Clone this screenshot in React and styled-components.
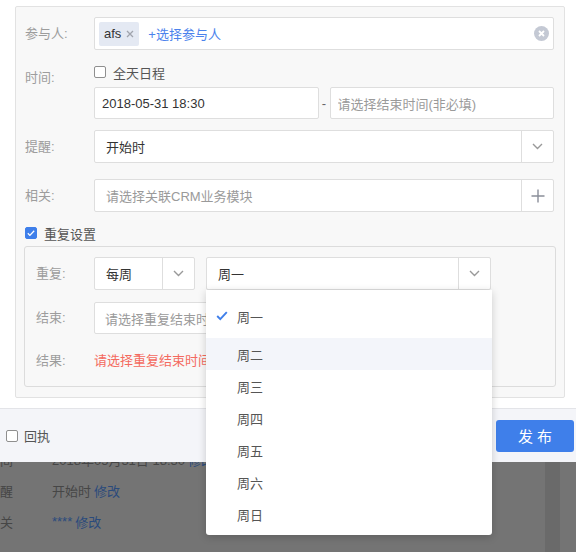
import styled, { createGlobalStyle } from "styled-components";

const GlobalStyle = createGlobalStyle`
  html, body {
    margin: 0;
    padding: 0;
  }
  body {
    background: #fff;
    font-family: "Liberation Sans", "Noto Sans CJK SC", sans-serif;
    font-size: 13px;
    color: #333;
  }
  * {
    box-sizing: border-box;
  }
`;

const weekDays = ["周一", "周二", "周三", "周四", "周五", "周六", "周日"];

function Chevron() {
  return (
    <svg width="11" height="7" viewBox="0 0 11 7">
      <path d="M1 1l4.5 4.5L10 1" fill="none" stroke="#999" strokeWidth="1.4" />
    </svg>
  );
}

function Plus() {
  return (
    <svg width="14" height="14" viewBox="0 0 14 14">
      <path d="M7 0.5v13M0.5 7h13" fill="none" stroke="#8a8e99" strokeWidth="1.4" />
    </svg>
  );
}

function Tick({ color = "#3f7fea", size = 12, width = 2 }) {
  return (
    <svg width={size} height={size * 0.8} viewBox="0 0 12 10">
      <path d="M1 5.2l3.2 3.2L11 1.2" fill="none" stroke={color} strokeWidth={width} />
    </svg>
  );
}

export default function App() {
  return (
    <Page>
      <GlobalStyle />
      <Sheet>
        <Panel>
          <Row>
            <Label>参与人:</Label>
            <Field $h={33} $pad={4}>
              <Tag>
                afs
                <svg width="8" height="8" viewBox="0 0 8 8">
                  <path d="M1 1l6 6M7 1L1 7" stroke="#a0a4ad" strokeWidth="1.3" />
                </svg>
              </Tag>
              <AddLink>+选择参与人</AddLink>
              <Clear>
                <svg width="15" height="15" viewBox="0 0 15 15">
                  <circle cx="7.5" cy="7.5" r="7.5" fill="#c4c9d4" />
                  <path d="M5 5l5 5M10 5l-5 5" stroke="#fff" strokeWidth="1.8" />
                </svg>
              </Clear>
            </Field>
          </Row>

          <Row $mt={12}>
            <Label $top={6} $self="start">时间:</Label>
            <div>
              <CheckLine>
                <Check />
                全天日程
              </CheckLine>
              <DateRow>
                <Field $h={32} $pad={7}>
                  <Value>2018-05-31 18:30</Value>
                </Field>
                <Dash>-</Dash>
                <Field $h={32} $pad={7}>
                  <Placeholder>请选择结束时间(非必填)</Placeholder>
                </Field>
              </DateRow>
            </div>
          </Row>

          <Row $mt={11}>
            <Label>提醒:</Label>
            <Field $h={33} $pad={11} $right={0}>
              <Value>开始时</Value>
              <SideCell>
                <Chevron />
              </SideCell>
            </Field>
          </Row>

          <Row $mt={16}>
            <Label>相关:</Label>
            <Field $h={33} $pad={11} $right={0}>
              <Placeholder>请选择关联CRM业务模块</Placeholder>
              <SideCell>
                <Plus />
              </SideCell>
            </Field>
          </Row>

          <CheckLine $mt={11}>
            <Check $on>
              <Tick color="#fff" size={8} width={2} />
            </Check>
            重复设置
          </CheckLine>

          <RepeatBox>
            <RepeatRow>
              <Label>重复:</Label>
              <Inline>
                <Field $h={33} $pad={11} $right={0} $w={101}>
                  <Value>每周</Value>
                  <SideCell>
                    <Chevron />
                  </SideCell>
                </Field>
                <SelectWrap>
                  <Field $h={33} $pad={11} $right={0} $w={285}>
                    <Value>周一</Value>
                    <SideCell>
                      <Chevron />
                    </SideCell>
                  </Field>
                  <Menu>
                    {weekDays.map((d, i) => (
                      <MenuItem key={d} $first={i === 0} $hover={i === 1}>
                        <TickSlot>{i === 0 && <Tick />}</TickSlot>
                        {d}
                      </MenuItem>
                    ))}
                  </Menu>
                </SelectWrap>
              </Inline>
            </RepeatRow>

            <RepeatRow $mt={12}>
              <Label>结束:</Label>
              <Field $h={32} $pad={10} $w={397}>
                <Placeholder>请选择重复结束时间</Placeholder>
              </Field>
            </RepeatRow>

            <RepeatRow $mt={17}>
              <Label>结果:</Label>
              <Warn>请选择重复结束时间</Warn>
            </RepeatRow>
          </RepeatBox>
        </Panel>
      </Sheet>

      <Footer>
        <CheckLine $gap={6}>
          <Check />
          回执
        </CheckLine>
        <Publish>发 布</Publish>
      </Footer>

      <Backdrop>
        <BehindList>
          <BehindRow>
            <BehindLabel>时间</BehindLabel>
            <span>2018年05月31日 18:30</span>
            <BehindLink>修改</BehindLink>
          </BehindRow>
          <BehindRow>
            <BehindLabel>提醒</BehindLabel>
            <span>开始时</span>
            <BehindLink>修改</BehindLink>
          </BehindRow>
          <BehindRow>
            <BehindLabel>相关</BehindLabel>
            <BehindLink $first>****</BehindLink>
            <BehindLink>修改</BehindLink>
          </BehindRow>
        </BehindList>
        <ScrollTrack />
        <div />
      </Backdrop>
    </Page>
  );
}

const Page = styled.div`
  width: 576px;
  height: 552px;
  display: flex;
  flex-direction: column;
  overflow: hidden;
`;

const Sheet = styled.div`
  height: 408px;
  padding: 6px 0 0 15px;
  background: #fff;
`;

const Panel = styled.div`
  width: 550px;
  border: 1px solid #e2e2e2;
  border-radius: 2px;
  background: #f8f8f8;
  padding: 10px 10px 10px 9px;
`;

const Row = styled.div`
  display: grid;
  grid-template-columns: 69px 1fr;
  margin-top: ${(p) => p.$mt || 0}px;
`;

const Label = styled.div`
  align-self: ${(p) => p.$self || "center"};
  padding-top: ${(p) => p.$top || 0}px;
  line-height: 20px;
  color: #9d9d9d;
  font-size: 13px;
  white-space: nowrap;
`;

const Field = styled.div`
  position: relative;
  display: flex;
  align-items: center;
  width: ${(p) => (p.$w ? `${p.$w}px` : "100%")};
  height: ${(p) => p.$h}px;
  padding: 0 ${(p) => (p.$right === undefined ? p.$pad : p.$right)}px 0 ${(p) => p.$pad}px;
  background: #fff;
  border: 1px solid #dedede;
  border-radius: 2px;
  flex: ${(p) => (p.$w ? "none" : "1")};
  min-width: 0;
`;

const Value = styled.span`
  flex: 1;
  color: #333;
  white-space: nowrap;
`;

const Placeholder = styled.span`
  flex: 1;
  color: #9a9a9a;
  white-space: nowrap;
  overflow: hidden;
`;

const SideCell = styled.div`
  width: 32px;
  height: 100%;
  border-left: 1px solid #dedede;
  display: flex;
  align-items: center;
  justify-content: center;
`;

const Tag = styled.span`
  display: inline-flex;
  align-items: center;
  gap: 5px;
  height: 24px;
  padding: 0 5px;
  background: #e4e9f3;
  border-radius: 2px;
  color: #333;
`;

const AddLink = styled.span`
  margin-left: 9px;
  color: #4b82ec;
`;

const Clear = styled.span`
  margin-left: auto;
  display: flex;
`;

const CheckLine = styled.div`
  display: flex;
  align-items: center;
  gap: ${(p) => p.$gap || 7}px;
  height: 20px;
  margin-top: ${(p) => p.$mt || 0}px;
  color: #555;
  font-size: 13px;
`;

const Check = styled.span`
  width: 12px;
  height: 12px;
  border-radius: 2px;
  border: 1px solid ${(p) => (p.$on ? "#3f7fea" : "#8f8f8f")};
  background: ${(p) => (p.$on ? "#3f7fea" : "#fff")};
  display: flex;
  align-items: center;
  justify-content: center;
`;

const DateRow = styled.div`
  display: flex;
  align-items: center;
  margin-top: 5px;
`;

const Dash = styled.span`
  width: 11px;
  text-align: center;
  color: #666;
`;

const RepeatBox = styled.div`
  margin: 3px -2px 0 -1px;
  border: 1px solid #dcdcdc;
  border-radius: 3px;
  background: #f8f8f8;
  padding: 10px 0 15px 11px;
`;

const RepeatRow = styled.div`
  display: grid;
  grid-template-columns: 58px 1fr;
  margin-top: ${(p) => p.$mt || 0}px;
`;

const Inline = styled.div`
  display: flex;
  gap: 11px;
`;

const SelectWrap = styled.div`
  position: relative;
`;

const Menu = styled.div`
  position: absolute;
  left: 0;
  top: 100%;
  width: 286px;
  padding-bottom: 5px;
  background: #fff;
  border-radius: 0 0 3px 3px;
  box-shadow: 0 2px 8px rgba(0, 0, 0, 0.18);
  z-index: 10;
`;

const MenuItem = styled.div`
  display: flex;
  align-items: center;
  height: ${(p) => (p.$first ? 48 : 32)}px;
  padding: ${(p) => (p.$first ? "9px 0 5px" : "0")};
  background: ${(p) => (p.$hover ? "#f3f5fa" : "#fff")};
  color: #555;
  font-size: 13px;
`;

const TickSlot = styled.span`
  width: 31px;
  padding-left: 10px;
  display: flex;
  align-items: center;
`;

const Warn = styled.div`
  line-height: 20px;
  color: #f46a5f;
`;

const Footer = styled.div`
  height: 54px;
  border-top: 1px solid #e3e4e8;
  background: #f4f5f9;
  display: flex;
  align-items: center;
  justify-content: space-between;
  padding: 0 2px 0 6px;
`;

const Publish = styled.button`
  width: 78px;
  height: 32px;
  border: none;
  border-radius: 3px;
  background: #3f7fea;
  color: #fff;
  font-family: "Liberation Sans", "Noto Sans CJK SC", sans-serif;
  font-size: 15px;
  padding: 0;
`;

const Backdrop = styled.div`
  flex: 1;
  display: grid;
  grid-template-columns: 545px 15px 16px;
  background: #747474;
`;

const BehindList = styled.div`
  overflow: hidden;
  & > :first-child {
    margin-top: -18px;
  }
`;

const BehindRow = styled.div`
  display: flex;
  align-items: center;
  height: 31px;
  margin-left: -13px;
  color: #464646;
  font-size: 13px;
  white-space: nowrap;
`;

const BehindLabel = styled.span`
  width: 65px;
  flex: none;
`;

const BehindLink = styled.span`
  margin-left: ${(p) => (p.$first ? 0 : 3)}px;
  color: #2a4a7c;
`;

const ScrollTrack = styled.div`
  background: #6a6a6a;
`;
